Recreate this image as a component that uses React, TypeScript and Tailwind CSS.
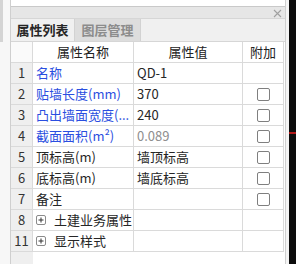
import React from 'react';

type Row = {
  no: string;
  name: string;
  value?: string;
  blue?: boolean;
  muted?: boolean;
  check?: boolean;
  group?: boolean;
};

const rows: Row[] = [
  { no: '1', name: '名称', value: 'QD-1', blue: true },
  { no: '2', name: '贴墙长度(mm)', value: '370', blue: true, check: true },
  { no: '3', name: '凸出墙面宽度(...', value: '240', blue: true, check: true },
  { no: '4', name: '截面面积(m²)', value: '0.089', blue: true, muted: true, check: true },
  { no: '5', name: '顶标高(m)', value: '墙顶标高', check: true },
  { no: '6', name: '底标高(m)', value: '墙底标高', check: true },
  { no: '7', name: '备注', check: true },
  { no: '8', name: '土建业务属性', group: true },
  { no: '11', name: '显示样式', group: true },
];

const PlusBox = () => (
  <span className="flex h-[10px] w-[10px] items-center justify-center rounded-[2px] border border-[#8a8a8a] bg-white">
    <svg width="6" height="6" viewBox="0 0 6 6">
      <path d="M3 0.5V5.5M0.5 3H5.5" stroke="#333" strokeWidth="1" />
    </svg>
  </span>
);

export default function App() {
  return (
    <div
      className="flex h-[264px] w-[296px] overflow-hidden bg-[#f7f7f7] text-[13px] text-[#222]"
      style={{ fontFamily: '"Noto Sans CJK SC", "Noto Sans", sans-serif' }}
    >
      {/* left gutter */}
      <div className="w-[10px] shrink-0">
        <div className="ml-[0px] h-[42px] w-[3px] bg-[#d4d4d4]" />
      </div>

      {/* panel */}
      <div className="flex w-[276px] shrink-0 flex-col border-x border-[#cfcfcf] bg-white">
        <div className="h-[7px] shrink-0 border-b border-[#c9c9c9] bg-white" />

        {/* title bar */}
        <div className="flex h-[11px] shrink-0 items-center justify-end bg-[#e6e6e6] pr-[3px]">
          <svg width="9" height="9" viewBox="0 0 9 9" className="mt-[2px]">
            <path d="M1 1L8 8M8 1L1 8" stroke="#a0a0a0" strokeWidth="1.1" />
          </svg>
        </div>

        {/* tabs */}
        <div className="flex h-[24px] shrink-0 border-y border-[#d6d6d6] bg-[#f0f0f0] font-bold">
          <div className="flex w-[64px] items-center justify-center border-r border-[#d2d2d2] bg-[#f0f0f0] text-[#262626]">
            属性列表
          </div>
          <div className="flex w-[66px] items-center justify-center border-r border-[#d2d2d2] bg-[#dddddd] text-[#8c8c8c]">
            图层管理
          </div>
        </div>

        {/* table */}
        <div className="flex w-[273px] flex-1 flex-col">
          <div className="flex h-[21px] shrink-0 border-b border-r border-[#dadada] bg-white">
            <div className="w-[22px] border-r border-[#dadada] bg-[#fafafa]" />
            <div className="flex w-[101px] items-center justify-center border-r border-[#dadada]">属性名称</div>
            <div className="flex w-[109px] items-center justify-center border-r border-[#dadada]">属性值</div>
            <div className="flex w-[40px] items-center justify-center">附加</div>
          </div>

          {rows.map((r) => (
            <div key={r.no} className="flex h-[21px] shrink-0 border-b border-r border-[#dadada]">
              <div className="flex w-[22px] items-center justify-center border-r border-[#dadada] bg-[#efefef] text-[#333]">
                {r.no}
              </div>
              <div
                className={`flex w-[101px] items-center gap-[8px] overflow-hidden whitespace-nowrap border-r border-[#dadada] pl-[3px] ${
                  r.blue ? 'text-[#2a4ee0]' : 'text-[#262626]'
                }`}
              >
                {r.group && <PlusBox />}
                <span>{r.name}</span>
              </div>
              <div
                className={`flex w-[109px] items-center whitespace-nowrap border-r border-[#dadada] pl-[3px] ${
                  r.muted ? 'text-[#8e8e8e]' : 'text-[#262626]'
                }`}
              >
                {r.value}
              </div>
              <div className="flex w-[40px] items-center justify-center">
                {r.check && (
                  <span className="h-[13px] w-[13px] rounded-[2px] border border-[#7f7f7f] bg-white" />
                )}
              </div>
            </div>
          ))}

          <div className="flex flex-1">
            <div className="w-[22px] bg-[#efefef]" />
          </div>
        </div>
      </div>

      {/* right edge */}
      <div className="flex w-[10px] shrink-0">
        <div className="w-[3px] bg-[#f4f4f4]" />
        <div className="relative flex-1 bg-[#0c0c0c]">
          <div className="absolute left-0 top-[132px] h-[2px] w-full bg-[#b01818]" />
        </div>
      </div>
    </div>
  );
}
